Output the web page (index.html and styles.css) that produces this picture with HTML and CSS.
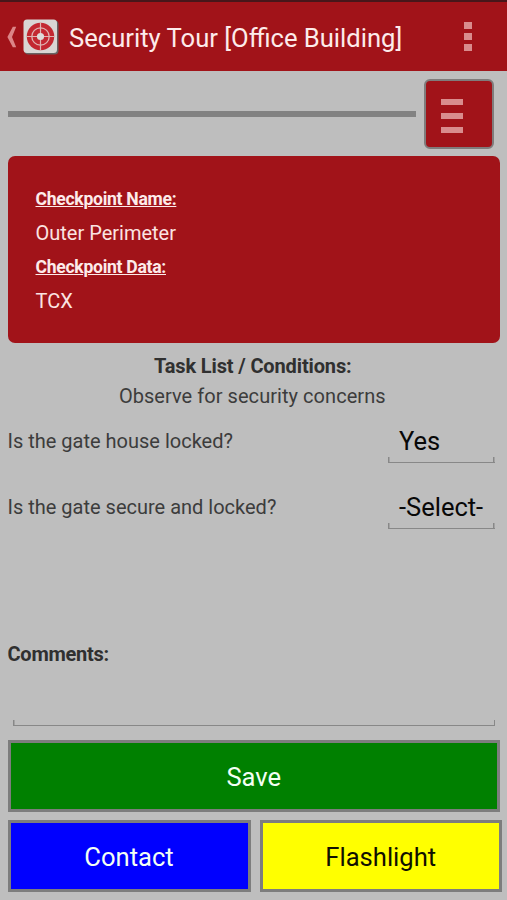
FILE: index.html
```html
<!DOCTYPE html>
<html lang="en">
<head>
<meta charset="utf-8">
<title>Security Tour</title>
<link rel="stylesheet" href="styles.css">
</head>
<body>
<header class="app-bar">
  <svg class="back" width="10" height="22" viewBox="0 0 10 22"><path d="M5.8 0.8h3.4L5 11l4.2 10.2H5.8L0.4 11z"/></svg>
  <svg class="logo" width="36" height="36" viewBox="0 0 36 36">
    <rect x="1.5" y="1.5" width="34" height="34" rx="4" fill="#676262"/>
    <rect x="0.5" y="0.5" width="33.5" height="33.5" rx="3.5" fill="#d9d6d4"/>
    <circle cx="17.5" cy="17.5" r="13.7" fill="#c32831"/>
    <circle cx="17.5" cy="17.5" r="8.7" fill="none" stroke="#dfb5b3" stroke-width="1.3"/>
    <path d="M17.5 3.5v28M3.5 17.5h28" stroke="#dfb5b3" stroke-width="1.2"/>
    <circle cx="17.5" cy="17.5" r="3.6" fill="#dedbd9"/>
  </svg>
  <h1 class="title">Security Tour [Office Building]</h1>
  <div class="overflow"><i></i><i></i><i></i></div>
</header>
<main>
  <div class="toolbar">
    <div class="rule"></div>
    <button class="menu" aria-label="Menu"><i></i><i></i><i></i></button>
  </div>
  <section class="card">
    <h2 class="label">Checkpoint Name:</h2>
    <p class="value">Outer Perimeter</p>
    <h2 class="label">Checkpoint Data:</h2>
    <p class="value">TCX</p>
  </section>
  <h2 class="tasks">Task List / Conditions:</h2>
  <p class="hint">Observe for security concerns</p>
  <div class="question"><span class="q-text">Is the gate house locked?</span><div class="field">Yes</div></div>
  <div class="question"><span class="q-text">Is the gate secure and locked?</span><div class="field">-Select-</div></div>
  <h2 class="comments">Comments:</h2>
  <div class="line-input"></div>
  <button class="btn save">Save</button>
  <div class="actions">
    <button class="btn contact">Contact</button>
    <button class="btn flash">Flashlight</button>
  </div>
</main>
</body>
</html>
```

FILE: styles.css
```css
* { box-sizing: border-box; margin: 0; padding: 0; }
body {
  width: 507px; height: 900px; overflow: hidden;
  background: #bebebe; color: #3c3c3c;
  font-family: Roboto, sans-serif; font-size: 20px;
}
.app-bar {
  height: 71px; border-top: 2px solid #48161a; background: #a11319;
  display: flex; align-items: center; padding: 0 35px 0 6.5px;
}
.back { fill: #dc8587; margin-right: 6.5px; }
.logo { margin-right: 10px; }
.title { flex: 1; font-size: 25.6px; font-weight: 400; color: #fdebea; line-height: 34px; padding-top: 2px; white-space: nowrap; }
.overflow { display: flex; flex-direction: column; gap: 3.5px; }
.overflow i { width: 8px; height: 7.5px; background: #d98c8d; }
main { padding: 0 7px 0 7.5px; }
.toolbar { display: flex; align-items: center; height: 85px; padding-right: 6px; justify-content: space-between; }
.rule { width: 408px; height: 5.5px; margin-top: 1px; background: #828282; }
.menu {
  width: 70px; height: 70px; border: 2.5px solid #807c7c; border-radius: 6px; background: #a11319;
  display: flex; flex-direction: column; justify-content: center; gap: 8px; padding: 4px 0 0 14.5px;
}
.menu i { width: 22.5px; height: 6px; background: #d98c8d; }
.card { height: 187px; border-radius: 7px; background: #a11319; color: #fbe3e2; padding: 29px 28px 27px; }
.label { font-size: 17.6px; letter-spacing: -0.3px; line-height: 28px; font-weight: 700; text-decoration: underline; text-decoration-thickness: 1px; color: #fdebea; }
.value { line-height: 40px; }
.tasks { text-align: center; font-size: 20px; letter-spacing: -0.13px; line-height: 30px; margin-top: 8px; padding-right: 2px; color: #303030; }
.hint { text-align: center; line-height: 31px; padding-right: 3px; letter-spacing: 0.05px; }
.question { display: flex; justify-content: space-between; height: 66px; padding: 13px 5.5px 0 0; line-height: 32px; }
.field { width: 107px; height: 38px; padding-left: 11.5px; font-size: 25.5px; color: #080808; white-space: nowrap; }
.field, .line-input {
  border-bottom: 1.5px solid #888;
  background: linear-gradient(#888, #888) left bottom / 1.5px 5px no-repeat, linear-gradient(#888, #888) right bottom / 1.5px 5px no-repeat;
}
.comments { font-size: 20px; letter-spacing: -0.25px; line-height: 30px; margin-top: 95px; color: #303030; }
.line-input { height: 57px; margin: 0 5px 14px 5.5px; }
.btn { display: block; height: 72px; border: 3px solid #7d7d7d; padding-top: 2px; font: 25.6px Roboto, sans-serif; color: #f4fff4; text-align: center; }
.save { width: 492.5px; background: #008000; }
.actions { display: flex; gap: 9px; margin: 8px -3px 0 0; }
.contact { width: 243px; background: #00f; }
.flash { width: 242.5px; background: #ff0; color: #101000; }
```
